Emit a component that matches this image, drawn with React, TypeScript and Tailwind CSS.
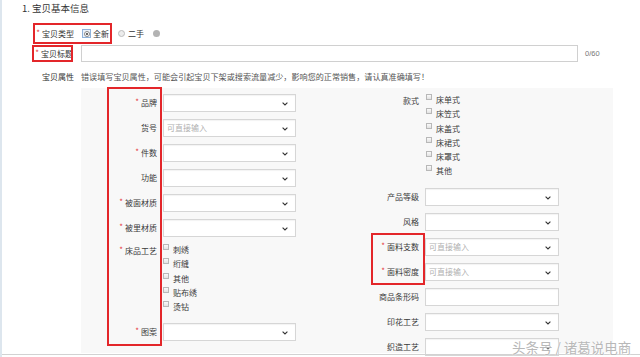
import React from "react";

const FONT = { fontFamily: '"Noto Sans CJK SC", "Noto Sans", sans-serif' };

interface FieldProps {
  label: string;
  required?: boolean;
  placeholder?: string;
  plain?: boolean;
  labelWidth: string;
  boxWidth: string;
}

const Star: React.FC = () => (
  <span className="text-[#e4393c] text-[8px] relative -top-[1px] mr-[2px]">*</span>
);

const Chevron: React.FC = () => (
  <svg width="6" height="4" viewBox="0 0 6 4" className="absolute right-[7px] top-[7px]">
    <path d="M0.6 0.6 L3 3 L5.4 0.6" fill="none" stroke="#333" strokeWidth="1.1" />
  </svg>
);

const SelectRow: React.FC<FieldProps> = ({ label, required, placeholder, plain, labelWidth, boxWidth }) => (
  <div className="flex items-center h-[18px] mb-[7px]">
    <div className={`${labelWidth} text-right text-[8px] text-[#3a3a3a] leading-[18px]`}>
      {required && <Star />}
      {label}
    </div>
    <div className={`${boxWidth} ml-[6px] h-[18px] relative bg-white border border-[#d6d6d6] shadow-[inset_0_1px_1px_rgba(0,0,0,0.05)]`}>
      {placeholder && (
        <span className="absolute left-[3px] top-0 leading-[16px] text-[8px] text-[#b0b0b0]">{placeholder}</span>
      )}
      {!plain && <Chevron />}
    </div>
  </div>
);

const Check: React.FC<{ text: string }> = ({ text }) => (
  <div className="flex items-start h-[14.25px]">
    <span className="w-[6px] h-[6px] mt-[1px] border border-[#b8b8b8] bg-gradient-to-b from-[#fafafa] to-[#e2e2e2]" />
    <span className="ml-[4px] text-[8px] leading-[14px] text-[#3a3a3a]">{text}</span>
  </div>
);

const CheckGroup: React.FC<{ label: string; required?: boolean; items: string[]; labelWidth: string; offset: string }> = ({
  label,
  required,
  items,
  labelWidth,
  offset,
}) => (
  <div className="flex items-start">
    <div className={`${labelWidth} text-right text-[8px] text-[#3a3a3a] leading-[16px]`}>
      {required && <Star />}
      {label}
    </div>
    <div className={`${offset} flex flex-col`}>
      {items.map((t) => (
        <Check key={t} text={t} />
      ))}
    </div>
  </div>
);

const App: React.FC = () => {
  const leftRows = [
    { label: "品牌", required: true },
    { label: "货号", placeholder: "可直接输入" },
    { label: "件数", required: true },
    { label: "功能" },
    { label: "被面材质", required: true },
    { label: "被里材质", required: true },
  ];
  const rightRows = [
    { label: "产品等级" },
    { label: "风格" },
    { label: "面料支数", required: true, placeholder: "可直接输入" },
    { label: "面料密度", required: true, placeholder: "可直接输入" },
    { label: "商品条形码", plain: true },
    { label: "印花工艺" },
    { label: "织造工艺" },
  ];

  return (
    <div
      className="relative w-[640px] h-[357px] overflow-hidden bg-white shadow-[inset_2px_0_0_#dde6ee]"
      style={FONT}
    >
      <div className="flex flex-col">
        {/* section title */}
        <div className="h-[16px] pl-[22px] text-[9.5px] leading-[16px] text-[#333]">1. 宝贝基本信息</div>

        {/* item type */}
        <div className="mt-[7px] h-[21px] flex items-center">
          <div className="w-[74px] text-right text-[8px] text-[#333]">
            <Star />
            宝贝类型
          </div>
          <span className="ml-[8px] w-[9px] h-[9px] border border-[#8fb2da] bg-[#e9f1fa] flex items-center justify-center">
            <span className="w-[6px] h-[6px] rounded-full border border-[#8a8a8a] bg-white flex items-center justify-center">
              <span className="w-[2px] h-[2px] rounded-full bg-[#333]" />
            </span>
          </span>
          <span className="ml-[2px] text-[8px] text-[#333]">全新</span>
          <span className="ml-[9px] w-[7px] h-[7px] rounded-full border border-[#bdbdbd] bg-[#ececec]" />
          <span className="ml-[3px] text-[8px] text-[#333]">二手</span>
          <span className="ml-[9px] w-[7px] h-[7px] rounded-full bg-[#b3b3b3]" />
        </div>

        {/* title */}
        <div className="mt-[1px] h-[17px] flex items-center">
          <div className="w-[73px] text-right text-[8px] text-[#333]">
            <Star />
            宝贝标题
          </div>
          <div className="ml-[8px] w-[497px] h-[17px] bg-white border border-[#d0d0d0]" />
          <span className="ml-[7px] text-[7.5px] text-[#777]" style={{ fontFamily: '"Liberation Sans", sans-serif' }}>
            0/60
          </span>
        </div>

        {/* attributes */}
        <div className="mt-[6px] h-[18px] flex items-center">
          <div className="w-[74px] text-right text-[8px] text-[#333]">宝贝属性</div>
          <div className="ml-[7px] text-[8.1px] text-[#555] whitespace-nowrap">
            错误填写宝贝属性，可能会引起宝贝下架或搜索流量减少，影响您的正常销售，请认真准确填写！
          </div>
        </div>

        <div className="mt-[2px] ml-[81px] w-[532px] h-[265px] bg-[#f8f8f8] flex">
          {/* left column */}
          <div className="w-[219px] pt-[6px] flex flex-col">
            {leftRows.map((r) => (
              <SelectRow key={r.label} {...r} labelWidth="w-[76px]" boxWidth="w-[133px]" />
            ))}
            <div className="-mt-[1px]">
              <CheckGroup
                label="床品工艺"
                required
                items={["刺绣", "绗缝", "其他", "贴布绣", "烫钻"]}
                labelWidth="w-[76px]"
                offset="ml-[6px]"
              />
            </div>
            <div className="mt-[9px]">
              <SelectRow label="图案" required labelWidth="w-[76px]" boxWidth="w-[133px]" />
            </div>
          </div>

          {/* right column */}
          <div className="w-[313px] pt-[5px] flex flex-col">
            <CheckGroup
              label="款式"
              items={["床单式", "床笠式", "床盖式", "床裙式", "床罩式", "其他"]}
              labelWidth="w-[119px]"
              offset="ml-[7px]"
            />
            <div className="mt-[9px] flex flex-col">
              {rightRows.map((r) => (
                <SelectRow key={r.label} {...r} labelWidth="w-[119px]" boxWidth="w-[134px]" />
              ))}
            </div>
          </div>
        </div>
      </div>

      {/* bottom rule */}
      <div className="absolute left-[2px] right-0 top-[354px] h-[1px] bg-[#d2d2d2]" />

      {/* red annotation boxes */}
      <div className="absolute left-[33px] top-[23px] w-[79px] h-[21px] border-2 border-[#e3262a]" />
      <div className="absolute left-[32px] top-[45px] w-[41px] h-[17px] border-2 border-[#e3262a]" />
      <div className="absolute left-[107px] top-[87px] w-[55px] h-[259px] border-2 border-[#e3262a]" />
      <div className="absolute left-[371px] top-[233px] w-[54px] h-[52px] border-2 border-[#e3262a]" />

      {/* watermark */}
      <div
        className="absolute left-[512px] top-[337px] text-[13.5px] text-[#b8b8b8] whitespace-nowrap [text-shadow:0_0_2px_#fff,0_0_1px_#fff]"
      >
        头条号 / 诸葛说电商
      </div>
    </div>
  );
};

export default App;
